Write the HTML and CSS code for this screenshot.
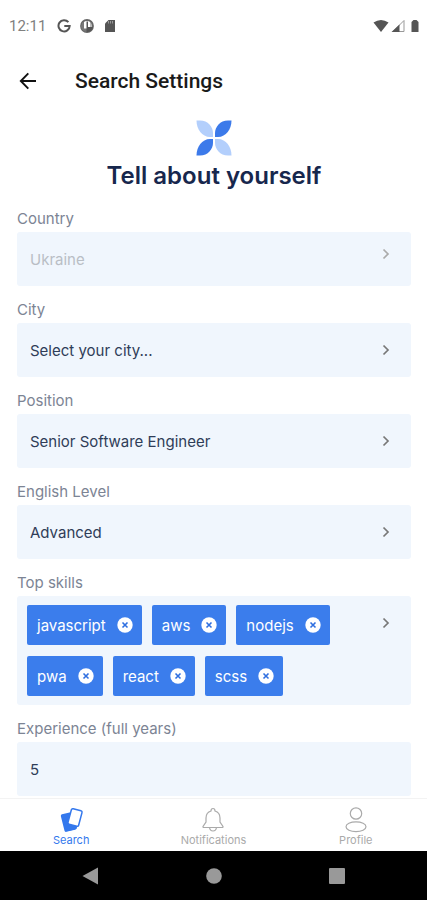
FILE: index.html
```html
<!DOCTYPE html>
<html lang="en">
<head>
<meta charset="utf-8">
<meta name="viewport" content="width=device-width, initial-scale=1">
<title>Search Settings</title>
<link rel="stylesheet" href="styles.css">
</head>
<body>
<svg class="sprite" aria-hidden="true">
  <symbol id="chevron" viewBox="0 0 8 12"><path d="M1.500 1.500 6 6l-4.500 4.500" fill="none" stroke="currentColor" stroke-width="1.700"/></symbol>
  <symbol id="remove" viewBox="0 0 16 16"><circle cx="8" cy="8" r="7.700" fill="#fff"/><path d="m5.500 5.500 5 5m0-5-5 5" stroke="#2f6fe0" stroke-width="1.600"/></symbol>
</svg>
<div class="screen">
  <div class="status">
    <span class="clock">12:11</span>
    <svg class="status-icon" viewBox="0 0 14 14"><path d="M11.400 3.200A5.600 5.600 0 1 0 12.700 7H7.300" fill="none" stroke="#555" stroke-width="2"/></svg>
    <svg class="status-icon" viewBox="0 0 14 14"><circle cx="7" cy="7" r="6" fill="#fff" stroke="#666" stroke-width="1.800"/><path d="M3 3h1v6.500h3V13Q1 12 1 7z" fill="#777"/><path d="M6.500 2.500H8V8h5a6 6 0 0 1-6.500 5z" fill="#555"/><path d="M10.500 3h1v5h-1z" fill="#777"/></svg>
    <svg class="status-icon" viewBox="0 0 14 14"><path d="M5.500 1H12v12H2V4.500z" fill="#555"/><path d="M5.500 2v2.500M7.500 2v2.500M9.500 2v2.500" stroke="#aaa" stroke-width=".8"/></svg>
    <span class="status-right">
      <svg width="16" height="14" viewBox="0 0 16 14"><path d="M.5 3.500Q8-1.500 15.500 3.500L8 13z" fill="#555"/></svg>
      <svg width="14" height="14" viewBox="0 0 14 14"><path d="M13 1.500v11H2z" fill="#fff" stroke="#999"/><path d="M8.500 5.500V13H.5z" fill="#555"/></svg>
      <svg width="10" height="14" viewBox="0 0 10 14"><path d="M1.500 3 3.500 1h3l2 2v10h-7z" fill="#555"/></svg>
    </span>
  </div>
  <header class="appbar">
    <button class="back" aria-label="Back"><svg width="18" height="18" viewBox="0 0 18 18"><path d="M17 9H2M9.300 1.300 1.800 9l7.500 7.700" fill="none" stroke="#111" stroke-width="1.900"/></svg></button>
    <h1>Search Settings</h1>
  </header>
  <main>
    <div class="intro">
      <svg class="logo" viewBox="0 0 36 36">
        <path d="M.5.500H4C12 .5 17 7 17 13v4h-3C6 17 .5 9 .5.500z" fill="#b3cffc"/>
        <path d="M35.500.500H32C24 .5 19 7 19 13v4h3C30 17 35.500 9 35.500.500z" fill="#3c7aea"/>
        <path d="M.5 35.500H4C12 35.500 17 29 17 23v-4h-3C6 19 .5 27 .5 35.500z" fill="#3c7aea"/>
        <path d="M35.500 35.500H32C24 35.500 19 29 19 23v-4h3C30 19 35.500 27 35.500 35.500z" fill="#b3cffc"/>
      </svg>
      <h2>Tell about yourself</h2>
    </div>
    <form>
      <div class="field">
        <label for="country">Country</label>
        <div class="control raised"><select id="country" disabled><option>Ukraine</option></select><svg class="chevron"><use href="#chevron"/></svg></div>
      </div>
      <div class="field">
        <label for="city">City</label>
        <div class="control"><select id="city"><option>Select your city...</option></select><svg class="chevron"><use href="#chevron"/></svg></div>
      </div>
      <div class="field">
        <label for="position">Position</label>
        <div class="control"><select id="position"><option>Senior Software Engineer</option></select><svg class="chevron"><use href="#chevron"/></svg></div>
      </div>
      <div class="field">
        <label for="english">English Level</label>
        <div class="control"><select id="english"><option>Advanced</option></select><svg class="chevron"><use href="#chevron"/></svg></div>
      </div>
      <div class="field" role="group" aria-labelledby="skills">
        <span class="label" id="skills">Top skills</span>
        <div class="control skills">
          <div class="chips">
            <button type="button" class="chip">javascript<svg><use href="#remove"/></svg></button>
            <button type="button" class="chip">aws<svg><use href="#remove"/></svg></button>
            <button type="button" class="chip">nodejs<svg><use href="#remove"/></svg></button>
            <button type="button" class="chip">pwa<svg><use href="#remove"/></svg></button>
            <button type="button" class="chip">react<svg><use href="#remove"/></svg></button>
            <button type="button" class="chip">scss<svg><use href="#remove"/></svg></button>
          </div>
          <svg class="chevron"><use href="#chevron"/></svg>
        </div>
      </div>
      <div class="field">
        <label for="experience">Experience (full years)</label>
        <div class="control"><input id="experience" type="text" inputmode="numeric" value="5"></div>
      </div>
    </form>
  </main>
  <nav class="tabs">
    <a href="#search" class="active"><svg viewBox="0 0 26 26"><rect x="4.500" y="6" width="12" height="18" rx="1.500" transform="rotate(-14 10.500 15)" fill="#3478ed"/><path d="M8 24.500 18.500 22l1-3-8-2z" fill="#3478ed"/><rect x="11.500" y="2.500" width="11" height="16" rx="1.500" transform="rotate(15 17 10.500)" fill="#fff" stroke="#3478ed" stroke-width="1.500"/></svg>Search</a>
    <a href="#notifications"><svg viewBox="0 0 26 26"><path d="M11 4q0-2.500 2-2.500T15 4q5 1.500 5 7v4l3 4.500q.3 1-1 1H4q-1.300 0-1-1L6 15v-4q0-5.500 5-7zM9.500 20.500q.5 3.500 3.500 3.500t3.500-3.500" fill="none" stroke="#aaa" stroke-width="1.200"/></svg>Notifications</a>
    <a href="#profile"><svg viewBox="0 0 26 26"><circle cx="13" cy="6.500" r="5.700" fill="none" stroke="#aaa" stroke-width="1.200"/><ellipse cx="13" cy="19.800" rx="10" ry="4.900" fill="none" stroke="#aaa" stroke-width="1.200"/></svg>Profile</a>
  </nav>
  <div class="system">
    <button aria-label="Back"><svg viewBox="0 0 18 18"><path d="M16 .5v17L.5 9z"/></svg></button>
    <button aria-label="Home"><svg viewBox="0 0 18 18"><circle cx="9" cy="9" r="7.800"/></svg></button>
    <button aria-label="Recents"><svg viewBox="0 0 18 18"><rect x="1" y="1" width="16" height="16" rx="1"/></svg></button>
  </div>
</div>
</body>
</html>
```
FILE: styles.css
```css
* { box-sizing: border-box; }
body { margin: 0; background: #fff; font-family: Inter, "Liberation Sans", sans-serif; font-size: 15px; color: #253450; }
button { border: 0; padding: 0; background: none; font: inherit; }
svg { display: block; flex: none; }
.sprite { position: absolute; width: 0; height: 0; }
.screen { display: flex; flex-direction: column; min-height: 100vh; }

.status { display: flex; align-items: center; gap: 9px; height: 52px; padding: 0 7px 0 9px; }
.clock { font: 15px Roboto, sans-serif; color: #808080; margin-right: 2px; }
.status-icon { width: 14px; height: 14px; }
.status-right { display: flex; align-items: center; gap: 2px; margin-left: auto; }
.status-right svg:last-child { margin-left: 3px; }

.appbar { display: flex; align-items: center; gap: 38px; height: 58px; padding: 0 19px; }
h1 { margin: 0; font: 500 21px Roboto, sans-serif; color: #1a1a1a; }

main { flex: 1; padding: 10px 16px 2px 17px; }
.intro { display: flex; flex-direction: column; align-items: center; gap: 4px; }
.logo { width: 36px; height: 36px; }
h2 { margin: 0; font-size: 24px; line-height: 32px; font-weight: 600; color: #17274d; }

form { padding-top: 13px; }
label, .label { display: block; height: 37px; padding-top: 14px; line-height: 20px; color: #7c8494; }
.field:first-child label { height: 27px; padding-top: 4px; }
.control { position: relative; min-height: 54px; border-radius: 3px; background: #f0f6fd; }
.control select, .control input { display: block; appearance: none; width: 100%; height: 54px; margin: 0; padding: 0 13px; border: 0; border-radius: 3px; background: transparent; font: inherit; color: #2f3d58; opacity: 1; }
.control select:disabled { color: #b9bec5; }
.chevron { position: absolute; top: 21px; right: 21px; width: 8px; height: 12px; color: #777; pointer-events: none; }
.raised .chevron { top: 16px; color: #aaa; }

.skills { padding: 9px 66px 9px 10px; }
.chips { display: flex; flex-wrap: wrap; gap: 11px 10px; }
.chip { display: flex; align-items: center; gap: 11px; height: 40px; padding: 0 9px 0 10px; border-radius: 2px; background: #3b7dec; color: #fff; }
.chip svg { width: 16px; height: 16px; }

.tabs { display: grid; grid-template-columns: repeat(3, 1fr); height: 53px; border-top: 1px solid #f3f3f3; background: #fff; }
.tabs a { display: flex; flex-direction: column; align-items: center; padding-top: 8px; font-size: 11px; line-height: 14px; color: #aaa; text-decoration: none; }
.tabs svg { width: 26px; height: 26px; }
.tabs .active { color: #3478ed; }

.system { display: flex; justify-content: center; align-items: center; gap: 105px; height: 49px; background: #000; }
.system svg { width: 18px; height: 18px; fill: #999; }
```
